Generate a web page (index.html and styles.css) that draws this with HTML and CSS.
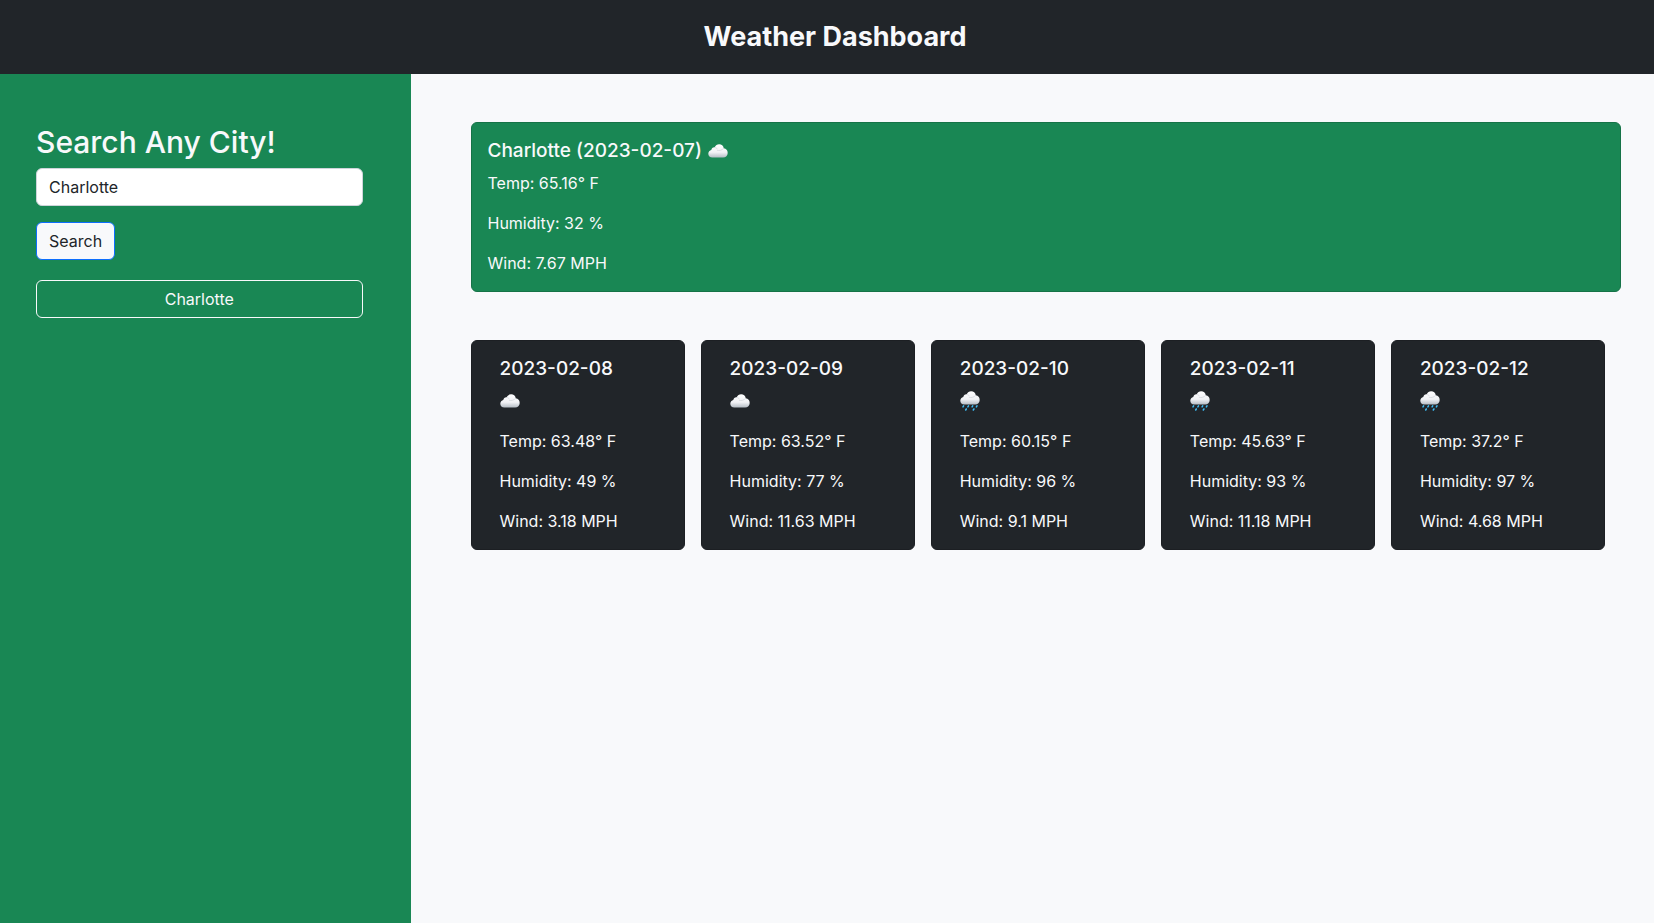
FILE: index.html
```html
<!DOCTYPE html>
<html lang="en">
<head>
<meta charset="utf-8">
<meta name="viewport" content="width=device-width, initial-scale=1">
<title>Weather Dashboard</title>
<link rel="stylesheet" href="styles.css">
</head>
<body>
<svg class="defs" aria-hidden="true">
  <defs>
    <linearGradient id="cloud-fill" x1="0" y1="0" x2="0" y2="1">
      <stop offset="0" stop-color="#ffffff"/>
      <stop offset="0.6" stop-color="#f1f2f5"/>
      <stop offset="1" stop-color="#b4bcc4"/>
    </linearGradient>
    <g id="cloud-shape">
      <path fill="url(#cloud-fill)" d="M4.4 13.6C1.8 13.6.3 11.9.3 9.8.3 7.9 1.6 6.5 3.3 6.1 3.5 4.3 5 3.1 6.7 3.3 7.6 1.4 9.2.3 11.1.3c2.500 0 4.300 1.600 4.700 4 2.300.2 3.900 2.100 3.900 4.600 0 2.700-1.900 4.700-4.600 4.700z"/>
      <path fill="none" stroke="#d3d7dc" stroke-width=".8" stroke-linecap="round" d="M7 3.500c1 .1 1.700.5 2.100 1.200M9.300 6.300c1.900.7 4.600.1 6.400-1.900"/>
    </g>
    <symbol id="cloud" viewBox="0 0 20 20">
      <use href="#cloud-shape" y="3"/>
    </symbol>
    <symbol id="rain" viewBox="0 0 20 20">
      <use href="#cloud-shape"/>
      <path fill="none" stroke="#3fbcf5" stroke-width="1.500" stroke-linecap="round" d="M3.600 14.900l-.6 1M8.500 14.900l-.6 1M12.700 14.900l-.6 1M17 14.900l-.6 1M6.300 18l-.6 1M13.900 18l-.6 1"/>
    </symbol>
  </defs>
</svg>

<header class="header">
  <h1 class="title">Weather Dashboard</h1>
</header>

<div class="layout">
  <aside class="sidebar">
    <form class="search" onsubmit="return false">
      <label class="search-label" for="city">Search Any City!</label>
      <input class="search-input" id="city" type="text" value="Charlotte">
      <button class="search-button" type="submit">Search</button>
    </form>
    <button class="history-button" type="button">Charlotte</button>
  </aside>

  <main class="main">
    <section class="card current">
      <h2 class="card-title">Charlotte (2023-02-07) <svg class="icon" role="img" aria-label="Cloudy"><use href="#cloud"/></svg></h2>
      <p>Temp: 65.16° F</p>
      <p>Humidity: 32 %</p>
      <p>Wind: 7.67 MPH</p>
    </section>

    <section class="forecast">
      <article class="card day">
        <h2 class="card-title">2023-02-08</h2>
        <p class="sky"><svg class="icon" role="img" aria-label="Cloudy"><use href="#cloud"/></svg></p>
        <p>Temp: 63.48° F</p>
        <p>Humidity: 49 %</p>
        <p>Wind: 3.18 MPH</p>
      </article>
      <article class="card day">
        <h2 class="card-title">2023-02-09</h2>
        <p class="sky"><svg class="icon" role="img" aria-label="Cloudy"><use href="#cloud"/></svg></p>
        <p>Temp: 63.52° F</p>
        <p>Humidity: 77 %</p>
        <p>Wind: 11.63 MPH</p>
      </article>
      <article class="card day">
        <h2 class="card-title">2023-02-10</h2>
        <p class="sky"><svg class="icon" role="img" aria-label="Rain"><use href="#rain"/></svg></p>
        <p>Temp: 60.15° F</p>
        <p>Humidity: 96 %</p>
        <p>Wind: 9.1 MPH</p>
      </article>
      <article class="card day">
        <h2 class="card-title">2023-02-11</h2>
        <p class="sky"><svg class="icon" role="img" aria-label="Rain"><use href="#rain"/></svg></p>
        <p>Temp: 45.63° F</p>
        <p>Humidity: 93 %</p>
        <p>Wind: 11.18 MPH</p>
      </article>
      <article class="card day">
        <h2 class="card-title">2023-02-12</h2>
        <p class="sky"><svg class="icon" role="img" aria-label="Rain"><use href="#rain"/></svg></p>
        <p>Temp: 37.2° F</p>
        <p>Humidity: 97 %</p>
        <p>Wind: 4.68 MPH</p>
      </article>
    </section>
  </main>
</div>
</body>
</html>
```
FILE: styles.css
```css
*, *::before, *::after {
  box-sizing: border-box;
}

body {
  display: flex;
  flex-direction: column;
  min-height: 100vh;
  margin: 0;
  background: #f8f9fb;
  color: #f8f9fb;
  font-family: Inter, "Liberation Sans", sans-serif;
  font-size: 16px;
  line-height: 24px;
}

.defs {
  position: absolute;
  width: 0;
  height: 0;
}

.header {
  padding: 20px 0 20px 16px;
  background: #212529;
  text-align: center;
}

.title {
  margin: 0;
  font-size: 27px;
  font-weight: 700;
  line-height: 34px;
}

.layout {
  display: flex;
  flex: 1;
}

.sidebar {
  flex: 0 0 calc(25% - 3px);
  padding: 48px 48px 48px 36px;
  background: #198754;
}

.search {
  display: flex;
  flex-direction: column;
  align-items: flex-start;
  margin-bottom: 20px;
}

.search-label {
  margin-bottom: 6px;
  font-size: 30px;
  font-weight: 500;
  line-height: 40px;
}

.search-input,
.search-button,
.history-button {
  padding: 6px 12px;
  border: 1px solid #ced4da;
  border-radius: 6px;
  font: inherit;
}

.search-input {
  width: 100%;
  margin-bottom: 16px;
  background: #fff;
  color: #212529;
}

.search-button {
  border-color: #0d6efd;
  background: #f8f9fb;
  color: #212529;
}

.history-button {
  width: 100%;
  border-color: #f8f9fb;
  background: transparent;
  color: #f8f9fb;
}

.main {
  flex: 1;
  min-width: 0;
  padding: 48px 33px 48px 60px;
}

.card {
  padding: 16px;
  border: 1px solid #1c1f23;
  border-radius: 6px;
}

.card-title {
  display: flex;
  align-items: center;
  gap: 6px;
  margin: 0 0 8px;
  font-size: 19px;
  font-weight: 500;
  line-height: 24px;
}

.card p {
  margin: 0 0 16px;
}

.card p:last-child {
  margin-bottom: 0;
}

.current {
  margin-bottom: 48px;
  border-color: #157347;
  background: #198754;
}

.forecast {
  display: grid;
  grid-template-columns: repeat(5, 1fr);
  gap: 16px;
  margin-right: 16px;
}

.day {
  padding: 16px 28px;
  background: #212529;
}

.icon {
  width: 20px;
  height: 20px;
}

.card .sky {
  display: flex;
  align-items: center;
  height: 24px;
}
```
